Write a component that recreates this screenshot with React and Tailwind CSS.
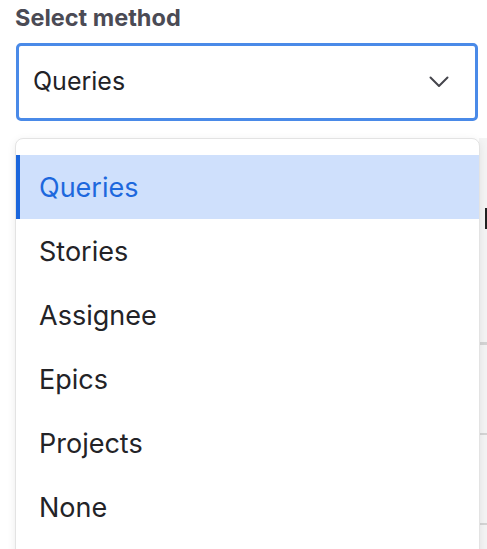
import React from 'react';

const options = ['Queries', 'Stories', 'Assignee', 'Epics', 'Projects', 'None'];

export default function App() {
  const selected = 'Queries';
  return (
    <div className="relative h-[549px] w-[487px] overflow-hidden bg-white" style={{ fontFamily: 'Inter, "Noto Sans", sans-serif' }}>
      <div className="px-[15px] pt-[3px]">
        <label className="block text-[23.5px] font-bold leading-[30px] text-[#4b4b55]">Select method</label>
        <div className="mt-[10px] ml-px flex h-[78px] w-[462px] items-center justify-between rounded-[5px] border-[3px] border-[#4a8ae8] pl-[14px] pr-[26px]">
          <span className="text-[25px] text-[#222226]">{selected}</span>
          <svg width="20" height="12" viewBox="0 0 20 12" fill="none" stroke="#45454c" strokeWidth="2" strokeLinecap="round" strokeLinejoin="round">
            <path d="M1.5 1.5 L10 10 L18.5 1.5" />
          </svg>
        </div>
      </div>

      {/* content behind the menu */}
      <div className="mt-[17px] ml-[479px] flex flex-col bg-[#f4f4f4]">
        <div className="relative h-[207px] border-b-[3px] border-[#d4d4d4]">
          <span className="absolute left-[6px] top-[70px] h-[21px] w-[2px] bg-[#222]" />
        </div>
        <div className="h-[90px] border-b-[2px] border-[#d4d4d4]" />
        <div className="h-[90px] border-b-[2px] border-[#d4d4d4]" />
        <div className="h-[40px]" />
      </div>

      <div className="absolute left-[15px] top-[138px] w-[465px] rounded-t-[8px] border border-[#e3e3e3] bg-white pt-[16px] pb-[20px] shadow-[0_2px_8px_rgba(0,0,0,0.08)]">
        {options.map((opt) => (
          <div
            key={opt}
            className={
              opt === selected
                ? 'flex h-[64px] items-center border-l-4 border-[#1b66dc] bg-[#cfe0fc] pl-[19px] pt-[2px] text-[27px] text-[#1d68dd]'
                : 'flex h-[64px] items-center pl-[23px] pt-[2px] text-[27px] text-[#232327]'
            }
          >
            {opt}
          </div>
        ))}
      </div>
    </div>
  );
}
